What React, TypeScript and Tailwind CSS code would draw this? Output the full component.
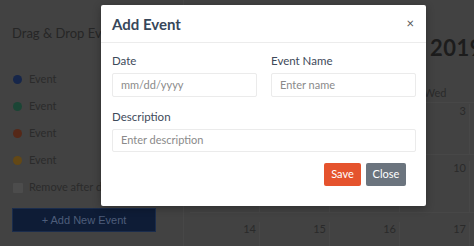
import React from "react";

const events = [
  { color: "bg-[#16264a]" },
  { color: "bg-[#1b4535]" },
  { color: "bg-[#552818]" },
  { color: "bg-[#634816]" },
];

function Sidebar() {
  return (
    <div className="w-[183px] shrink-0 pl-[12px] pt-[24px] font-['Lato',sans-serif]">
      <div className="h-[18px] text-[13px] leading-[18px] text-[#262626] whitespace-nowrap">
        Drag &amp; Drop Events
      </div>
      <div className="mt-[24px] flex flex-col">
        {events.map((e, i) => (
          <div key={i} className="h-[27px] flex items-center gap-[7px]">
            <span className={`ml-[1px] w-[9px] h-[9px] rounded-full ${e.color}`} />
            <span className="text-[11px] text-[#2b2b2b]">Event</span>
          </div>
        ))}
        <div className="h-[27px] flex items-center gap-[6px]">
          <span className="ml-[1px] w-[10px] h-[10px] rounded-[1px] bg-[#4c4c4c]" />
          <span className="text-[11px] text-[#2b2b2b] whitespace-nowrap">Remove after drop</span>
        </div>
      </div>
      <button className="mt-[7px] w-[144px] h-[24px] bg-[#0e1c36] border border-[#1a2c4c] text-[11px] text-[#4d5d7a] font-['Liberation_Sans',sans-serif] flex items-center justify-center">
        + Add New Event
      </button>
    </div>
  );
}

const rows = [
  ["", "", "", "3"],
  ["", "", "", "10"],
  ["14", "15", "16", "17"],
];

function Calendar() {
  return (
    <div className="flex-1 border-l border-[#474747] font-['Lato',sans-serif]">
      <div className="h-[83px] pl-[246px] pt-[36px] whitespace-nowrap">
        <span className="text-[22px] leading-[24px] font-bold text-[#1c1c1c] tracking-[0.5px]">2019</span>
      </div>
      <div className="pl-[6px]">
        <div className="flex h-[20px] border-b border-[#474747]">
          {["Sun", "Mon", "Tue", "Wed"].map((d, i) => (
            <div
              key={d}
              className={`w-[70px] shrink-0 text-center text-[11px] leading-[20px] text-[#2a2a2a] ${i === 3 ? "" : "opacity-0"}`}
            >
              {d}
            </div>
          ))}
        </div>
        {rows.map((r, ri) => (
          <div
            key={ri}
            className={`flex border-b border-[#474747] ${ri === 0 ? "h-[52px] pt-[1px]" : ri === 1 ? "h-[58px] pt-[6px]" : "h-[40px] pt-[9px]"}`}
          >
            {r.map((n, ci) => (
              <div
                key={ci}
                className="w-[70px] shrink-0 border-r border-[#474747] pr-[3px] text-right text-[11px] leading-[14px] text-[#2a2a2a]"
              >
                {n}
              </div>
            ))}
          </div>
        ))}
      </div>
    </div>
  );
}

function Modal() {
  return (
    <div className="absolute left-[101px] top-[5px] w-[325px] h-[201px] bg-white rounded-[2px] shadow-[0_2px_8px_rgba(0,0,0,0.3)] font-['Lato',sans-serif]">
      <div className="h-[38px] border-b border-[#ececec] flex items-center justify-between pl-[11px] pr-[12px]">
        <span className="text-[15px] font-bold text-[#37475a] pt-[1px]">Add Event</span>
        <span className="text-[13px] leading-none text-[#555] pb-[1px]">×</span>
      </div>
      <div className="pl-[11px] pr-[10px] pt-[11px]">
        <div className="grid grid-cols-2 gap-x-[14px]">
          <div>
            <div className="text-[11.5px] leading-[14px] text-[#3e4a5a]">Date</div>
            <div className="mt-[5px] h-[24px] border border-[#ebebeb] rounded-[2px] flex items-center pl-[8px] text-[11px] text-[#8a8a8a]">
              mm/dd/yyyy
            </div>
          </div>
          <div>
            <div className="text-[11.5px] leading-[14px] text-[#3e4a5a]">Event Name</div>
            <div className="mt-[5px] h-[24px] border border-[#ebebeb] rounded-[2px] flex items-center pl-[8px] text-[11px] text-[#8a8a8a]">
              Enter name
            </div>
          </div>
        </div>
        <div className="mt-[13px] text-[11.5px] leading-[14px] text-[#3e4a5a]">Description</div>
        <div className="mt-[5px] h-[23px] border border-[#ebebeb] rounded-[2px] flex items-center pl-[8px] text-[11px] text-[#8a8a8a]">
          Enter description
        </div>
      </div>
      <div className="mt-[11px] pr-[20px] flex justify-end gap-[5px]">
        <button className="w-[37px] h-[23px] rounded-[2px] bg-[#e5532d] text-white text-[11px]">Save</button>
        <button className="w-[40px] h-[23px] rounded-[2px] bg-[#6b747e] text-white text-[11px]">Close</button>
      </div>
    </div>
  );
}

export default function App() {
  return (
    <div className="relative w-[474px] h-[246px] overflow-hidden bg-[#424242]">
      <div className="flex h-full">
        <Sidebar />
        <Calendar />
      </div>
      <Modal />
    </div>
  );
}
